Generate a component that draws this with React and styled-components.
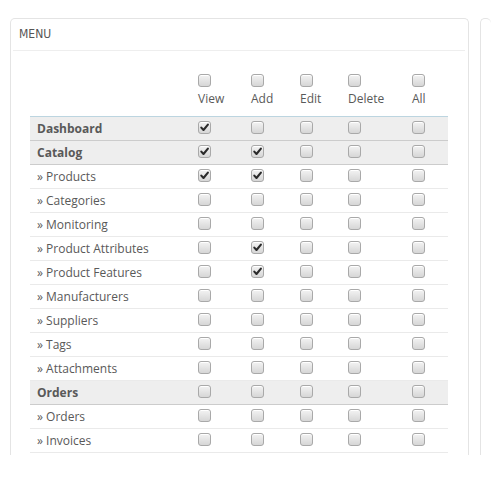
import React from "react";
import styled, { createGlobalStyle } from "styled-components";

const GlobalStyle = createGlobalStyle`
  html, body {
    margin: 0;
    padding: 0;
    background: #fff;
    overflow: hidden;
  }
  body {
    font-family: "Open Sans", "Liberation Sans", sans-serif;
    font-size: 12px;
    color: #595959;
  }
`;

const Page = styled.div`
  display: flex;
  gap: 11px;
  padding: 18px 0 0 10px;
  height: 437px;
`;

const Panel = styled.section`
  flex-shrink: 0;
  width: ${(p) => p.width}px;
  box-sizing: border-box;
  border: 1px solid #e4e4e4;
  border-bottom: none;
  ${(p) => p.cut && "border-right: none;"}
  border-radius: 5px 5px 0 0;
  padding: ${(p) => (p.cut ? "0" : "0 20px 3px 19px")};
  display: flex;
  flex-direction: column;
`;

const Heading = styled.h3`
  margin: 0 -17px;
  padding: 0 6px;
  height: 31px;
  line-height: 31px;
  border-bottom: 1px solid #eeeeee;
  font-family: "DejaVu Sans Condensed", "Liberation Sans Narrow", "Open Sans", sans-serif;
  font-weight: normal;
  font-size: 12px;
  text-transform: uppercase;
  color: #555;
`;

const Table = styled.table`
  width: 418px;
  border-collapse: collapse;
  table-layout: fixed;
`;

const HeadCell = styled.th`
  height: 57px;
  padding: 0 0 8px 8px;
  vertical-align: bottom;
  text-align: left;
  font-weight: normal;
  line-height: 18px;
  border-bottom: 1px solid #bcd5e0;
`;

const HeadLabel = styled.span`
  display: block;
  margin-top: 3px;
  white-space: nowrap;
`;

const Row = styled.tr`
  background: ${(p) => (p.group ? "#eeeeee" : "transparent")};
  border-bottom: 1px solid ${(p) => (p.group ? "#cccccc" : "#eaeaea")};
`;

const NameCell = styled.td`
  height: 23px;
  padding: 0 0 0 7px;
  font-weight: ${(p) => (p.group ? 700 : 400)};
  white-space: nowrap;
`;

const BoxCell = styled.td`
  padding: 0 0 2px 8px;
  vertical-align: middle;
`;

const Box = styled.span`
  display: block;
  box-sizing: border-box;
  width: 13px;
  height: 13px;
  border: 1px solid #a9a9a9;
  border-radius: 3px;
  background: linear-gradient(#f3f3f3, #d6d6d6);
  box-shadow: inset 0 1px 0 #fff;
`;

const Check = () => (
  <svg width="11" height="11" viewBox="0 0 11 11" style={{ display: "block" }}>
    <path d="M2.3 5.6 L4.5 8 L8.9 2.6" fill="none" stroke="#2b2b2b" strokeWidth="2.1" strokeLinecap="round" strokeLinejoin="round" />
  </svg>
);

const Checkbox = ({ checked }) => <Box>{checked && <Check />}</Box>;

const columns = [
  { label: "View", width: 53 },
  { label: "Add", width: 49 },
  { label: "Edit", width: 48 },
  { label: "Delete", width: 64 },
  { label: "All", width: 44 },
];

const rows = [
  { name: "Dashboard", group: true, checks: [1, 0, 0, 0, 0] },
  { name: "Catalog", group: true, checks: [1, 1, 0, 0, 0] },
  { name: "» Products", checks: [1, 1, 0, 0, 0] },
  { name: "» Categories", checks: [0, 0, 0, 0, 0] },
  { name: "» Monitoring", checks: [0, 0, 0, 0, 0] },
  { name: "» Product Attributes", checks: [0, 1, 0, 0, 0] },
  { name: "» Product Features", checks: [0, 1, 0, 0, 0] },
  { name: "» Manufacturers", checks: [0, 0, 0, 0, 0] },
  { name: "» Suppliers", checks: [0, 0, 0, 0, 0] },
  { name: "» Tags", checks: [0, 0, 0, 0, 0] },
  { name: "» Attachments", checks: [0, 0, 0, 0, 0] },
  { name: "Orders", group: true, checks: [0, 0, 0, 0, 0] },
  { name: "» Orders", checks: [0, 0, 0, 0, 0] },
  { name: "» Invoices", checks: [0, 0, 0, 0, 0] },
];

export default function App() {
  return (
    <>
      <GlobalStyle />
      <Page>
        <Panel width={459}>
          <Heading>Menu</Heading>
          <Table>
            <colgroup>
              <col style={{ width: 160 }} />
              {columns.map((c) => (
                <col key={c.label} style={{ width: c.width }} />
              ))}
            </colgroup>
            <thead>
              <tr>
                <HeadCell />
                {columns.map((c) => (
                  <HeadCell key={c.label}>
                    <Checkbox />
                    <HeadLabel>{c.label}</HeadLabel>
                  </HeadCell>
                ))}
              </tr>
            </thead>
            <tbody>
              {rows.map((r) => (
                <Row key={r.name + (r.group ? "g" : "")} group={r.group}>
                  <NameCell group={r.group}>{r.name}</NameCell>
                  {r.checks.map((v, i) => (
                    <BoxCell key={i}>
                      <Checkbox checked={!!v} />
                    </BoxCell>
                  ))}
                </Row>
              ))}
            </tbody>
          </Table>
        </Panel>
        <Panel width={11} cut />
      </Page>
    </>
  );
}
